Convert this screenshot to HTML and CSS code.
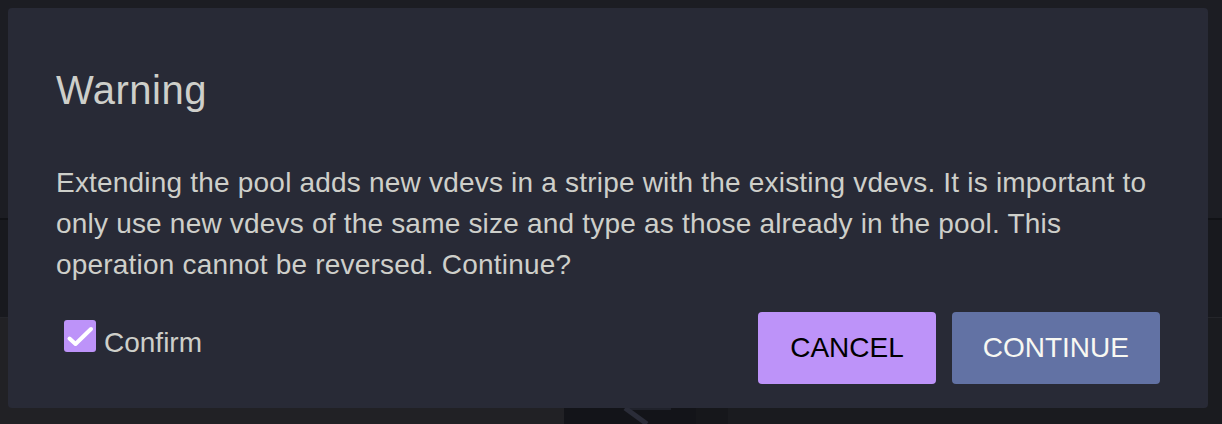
FILE: index.html
```html
<!DOCTYPE html>
<html lang="en">
<head>
  <meta charset="UTF-8" />
  <meta name="viewport" content="width=device-width, initial-scale=1.0" />
  <title>Extend pool – Warning</title>
  <link rel="stylesheet" href="styles.css">
</head>
<body>

  <!-- app behind the modal (dimmed) -->
  <div class="app">
    <div class="app-top"></div>
    <div class="app-mid"></div>
    <div class="app-bottom">
      <div class="panel-left"></div>
      <div class="panel-dark">
        <svg width="132" height="16" viewBox="0 0 132 16">
          <rect x="61" y="0" width="46" height="2" fill="#20222b" />
          <path d="M61 0 L83 16" stroke="#2a2c38" stroke-width="5" />
        </svg>
      </div>
      <div class="panel-dark alt"></div>
      <div class="panel-right"></div>
    </div>
  </div>

  <!-- modal -->
  <div class="overlay">
    <div class="dialog" role="dialog">
      <h2 class="dialog-title">Warning</h2>
      <p class="dialog-text">
        Extending the pool adds new vdevs in a stripe with the existing vdevs. It is important to
        only use new vdevs of the same size and type as those already in the pool. This
        operation cannot be reversed. Continue?
      </p>
      <div class="dialog-actions">
        <label class="confirm">
          <svg class="checkbox" width="32" height="32" viewBox="0 0 32 32">
            <rect width="32" height="32" rx="3" fill="#bd93f9" />
            <path d="M5.5 18.5 L11.5 24 L27 9" fill="none" stroke="#fff" stroke-width="4" stroke-linecap="round" stroke-linejoin="round" />
          </svg>
          <span>Confirm</span>
        </label>
        <div class="buttons">
          <button class="btn btn-cancel">CANCEL</button>
          <button class="btn btn-continue">CONTINUE</button>
        </div>
      </div>
    </div>
  </div>

</body>
</html>
```

FILE: styles.css
```css
* {
  margin: 0;
  padding: 0;
  box-sizing: border-box;
  font-family: 'Liberation Sans', Arial, sans-serif;
}

body {
  background: #1c1d22;
  overflow: hidden;
}

/* Dimmed app in the background */
.app {
  height: 424px;
  display: grid;
  grid-template-rows: 220px 98px 1fr;
}

.app-top {
  background: #1c1d23;
  border-bottom: 2px solid #111216;
}

.app-mid {
  background: #18191e;
  border-bottom: 1px solid #24252a;
}

.app-bottom {
  display: flex;
}

.panel-left {
  width: 564px;
  background: #212125;
}

.panel-dark {
  width: 132px;
  background: #131419;
  display: flex;
  align-items: flex-end;
}

.panel-dark.alt {
  width: 32px;
  background: #16171b;
}

.panel-right {
  flex: 1;
  background: #1a1b1f;
}

/* Modal */
.overlay {
  position: fixed;
  inset: 0;
  padding: 8px;
}

.dialog {
  width: 1200px;
  background: #282a36;
  border-radius: 4px;
  padding: 58px 48px 24px;
  color: #cecfca;
}

.dialog-title {
  font-size: 40px;
  font-weight: 400;
  line-height: 48px;
  letter-spacing: 0.5px;
  margin-bottom: 48px;
}

.dialog-text {
  font-size: 28px;
  line-height: 41px;
  letter-spacing: 0.2px;
  margin-bottom: 27px;
}

.dialog-actions {
  display: flex;
  justify-content: space-between;
  align-items: flex-start;
}

.confirm {
  display: flex;
  align-items: baseline;
  gap: 8px;
  margin: 8px 0 0 8px;
  font-size: 28px;
  line-height: 28px;
}

.checkbox {
  display: block;
  flex: none;
}

.buttons {
  display: flex;
  gap: 16px;
}

.btn {
  height: 72px;
  padding: 0 32px;
  border: none;
  border-radius: 4px;
  font-size: 28px;
  cursor: pointer;
}

.btn-cancel {
  background: #bd93f9;
  color: #000;
}

.btn-continue {
  background: #6272a4;
  color: #f8f8f2;
  padding: 0 31px;
}
```
